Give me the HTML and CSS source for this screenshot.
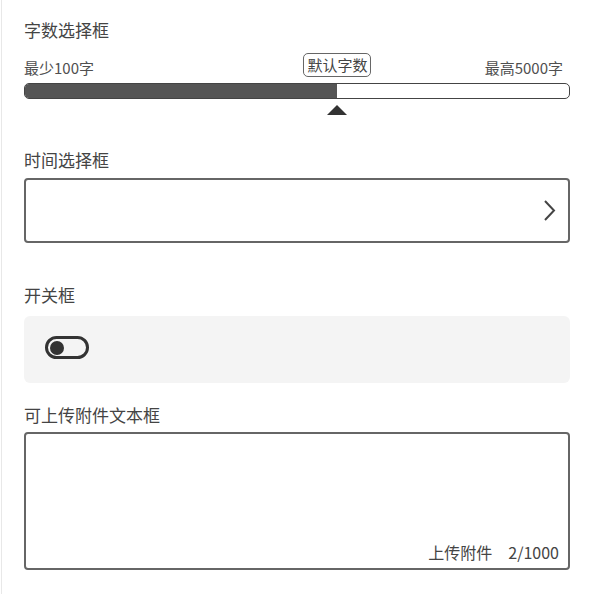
FILE: index.html
```html
<!DOCTYPE html>
<html lang="zh-CN">
<head>
  <meta charset="UTF-8" />
  <meta name="viewport" content="width=device-width, initial-scale=1.0" />
  <title>表单控件</title>
  <link rel="stylesheet" href="styles.css">
</head>
<body>

  <div class="page">
    <!-- 字数选择 -->
    <section class="field field-range">
      <div class="field-label">字数选择框</div>
      <div class="range">
        <div class="range-labels">
          <span>最少100字</span>
          <span>最高5000字</span>
        </div>
        <span class="range-default" style="left: 57.4%">默认字数</span>
        <div class="range-track">
          <div class="range-fill" style="width: 57.4%"></div>
        </div>
        <div class="range-marker-row">
          <div class="range-marker" style="margin-left: 57.4%"></div>
        </div>
      </div>
    </section>

    <!-- 时间选择 -->
    <section class="field field-time">
      <div class="field-label">时间选择框</div>
      <div class="picker">
        <svg class="chevron" width="13" height="23" viewBox="0 0 13 23">
          <path d="M2 2 L11 11.5 L2 21" fill="none" stroke="#444" stroke-width="2" />
        </svg>
      </div>
    </section>

    <!-- 开关 -->
    <section class="field field-switch">
      <div class="field-label">开关框</div>
      <div class="switch-box">
        <div class="switch"><div class="switch-knob"></div></div>
      </div>
    </section>

    <!-- 文本框 -->
    <section class="field field-text">
      <div class="field-label">可上传附件文本框</div>
      <div class="textbox">
        <div class="textbox-footer">
          <span>上传附件</span>
          <span>2/1000</span>
        </div>
      </div>
    </section>
  </div>

</body>
</html>
```

FILE: styles.css
```css
:root {
  --text: #444444;
  --line: #666666;
  --fill: #555555;
  --panel: #f4f4f4;
}

* {
  margin: 0;
  padding: 0;
  box-sizing: border-box;
}

html,
body {
  width: 100%;
  height: 100%;
  overflow: hidden;
  background: #ffffff;
  color: var(--text);
  font-family: "Noto Sans CJK SC", "Noto Sans", sans-serif;
}

.page {
  margin-left: 1px;
  border-left: 1px solid #e8e8e8;
  padding: 18px 30px 0 22px;
  height: 100%;
}

.field-label {
  font-size: 17px;
  line-height: 23px;
}

/* 字数选择 */
.range {
  position: relative;
  margin-top: 12px;
}

.range-labels {
  display: flex;
  justify-content: space-between;
  align-items: flex-end;
  height: 25px;
  padding-right: 7px;
  font-size: 15px;
  line-height: 20px;
  color: #505050;
}

.range-default {
  position: absolute;
  top: 0;
  transform: translateX(-50%);
  font-size: 15px;
  line-height: 20px;
  padding: 1px 3px;
  border: 1.5px solid var(--line);
  border-radius: 5px;
  background: #ffffff;
}

.range-track {
  margin-top: 5px;
  height: 16px;
  border: 1.5px solid #444444;
  border-radius: 5px;
  overflow: hidden;
}

.range-fill {
  height: 100%;
  background: var(--fill);
}

.range-marker-row {
  padding-top: 6px;
  height: 17px;
}

.range-marker {
  width: 0;
  height: 0;
  transform: translateX(-50%);
  border-left: 10px solid transparent;
  border-right: 10px solid transparent;
  border-bottom: 10px solid #333333;
}

/* 时间选择 */
.field-time {
  margin-top: 32px;
}

.picker {
  margin-top: 7px;
  height: 65px;
  border: 2px solid var(--line);
  border-radius: 4px;
  display: flex;
  align-items: center;
  justify-content: flex-end;
  padding-right: 12px;
}

/* 开关 */
.field-switch {
  margin-top: 40px;
}

.switch-box {
  margin-top: 10px;
  height: 67px;
  background: var(--panel);
  border-radius: 6px;
  display: flex;
  align-items: center;
  padding: 0 0 4px 21px;
}

.switch {
  width: 44px;
  height: 23px;
  border: 3px solid #333333;
  border-radius: 12px;
  display: flex;
  align-items: center;
  padding-left: 2px;
}

.switch-knob {
  width: 14px;
  height: 14px;
  border-radius: 50%;
  background: #333333;
}

/* 文本框 */
.field-text {
  margin-top: 20px;
}

.textbox {
  margin-top: 6px;
  height: 138px;
  border: 2px solid var(--line);
  border-radius: 4px;
  display: flex;
  flex-direction: column;
  justify-content: flex-end;
  padding: 0 9px 6px;
}

.textbox-footer {
  display: flex;
  justify-content: flex-end;
  gap: 16px;
  font-size: 16px;
  line-height: 20px;
}
```
